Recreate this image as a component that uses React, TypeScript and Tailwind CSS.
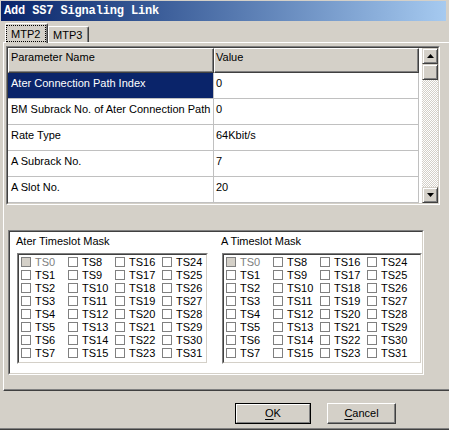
import React from 'react';

const raised =
  'border border-t-[#d4d0c8] border-l-[#d4d0c8] border-r-[#404040] border-b-[#404040] shadow-[inset_1px_1px_0_#ffffff,inset_-1px_-1px_0_#808080] bg-[#d4d0c8]';

const rows: [string, string][] = [
  ['Ater Connection Path Index', '0'],
  ['BM Subrack No. of Ater Connection Path', '0'],
  ['Rate Type', '64Kbit/s'],
  ['A Subrack No.', '7'],
  ['A Slot No.', '20'],
];

const slots = Array.from({ length: 32 }, (_, i) => i);

function Arrow({ down = false }: { down?: boolean }) {
  return (
    <svg width="7" height="4" viewBox="0 0 7 4">
      <polygon points={down ? '0,0 7,0 3.5,4' : '3.5,0 7,4 0,4'} fill="#000" />
    </svg>
  );
}

function Check({ n }: { n: number }) {
  const disabled = n === 0;
  return (
    <div className="flex items-start h-[13px] w-[47px]">
      <span
        className={`w-[10px] h-[10px] shrink-0 border border-[#808080] ${
          disabled ? 'bg-[#d4d0c8]' : 'bg-white'
        }`}
      />
      <span className={`ml-[4px] leading-[10px] ${disabled ? 'text-[#808080]' : 'text-black'}`}>
        TS{n}
      </span>
    </div>
  );
}

function SlotGroup({ title, width }: { title: string; width: string }) {
  return (
    <div className="flex flex-col">
      <div className="leading-[13px] mt-[3px] -ml-[1px]">{title}</div>
      <div
        className={`mt-[5px] ${width} border border-t-[#808080] border-l-[#808080] border-r-white border-b-white`}
      >
        <div className="border border-t-[#404040] border-l-[#404040] border-r-[#d4d0c8] border-b-[#d4d0c8] bg-white pt-[2px] pb-[1px] pl-[2px]">
          <div className="grid grid-flow-col grid-rows-8 w-max">
            {slots.map((n) => (
              <Check key={n} n={n} />
            ))}
          </div>
        </div>
      </div>
    </div>
  );
}

export default function App() {
  return (
    <div className="w-[449px] h-[430px] overflow-hidden bg-[#d4d0c8] flex flex-col text-[11px] text-black font-['Liberation_Sans',Arial,sans-serif] border-b border-b-[#404040] shadow-[inset_0_-1px_0_#808080]">
      {/* title bar */}
      <div className="h-[21px] pt-[1px] pl-[1px] shrink-0">
        <div className="w-[445px] h-[20px] bg-gradient-to-r from-[#0a246a] to-[#a6caf0] pl-[3px] flex items-center">
          <span className="font-['Liberation_Mono',monospace] font-bold text-[12px] text-white leading-none tracking-[-0.15px]">
            Add SS7 Signaling Link
          </span>
        </div>
      </div>

      {/* tabs */}
      <div className="h-[21px] pl-[5px] flex items-end shrink-0">
        <div className="relative z-10 w-[43px] h-[20px] -mb-[1px] bg-[#d4d0c8] border-t border-l border-t-white border-l-white border-r border-r-[#404040] shadow-[inset_-1px_0_0_#808080] rounded-tl-[2px] rounded-tr-[2px] pt-[1px] pr-[1px]">
          <div className="h-[17px] border border-dotted border-black pl-[4px] pt-[2px] leading-[13px]">
            MTP2
          </div>
        </div>
        <div className="w-[41px] h-[16px] bg-[#d4d0c8] border-t border-l border-t-white border-l-white border-r border-r-[#404040] shadow-[inset_-1px_0_0_#808080] rounded-tr-[2px] pl-[4px] pt-[2px] leading-[13px]">
          MTP3
        </div>
      </div>

      {/* tab panel */}
      <div className="ml-[3px] w-[450px] h-[349px] shrink-0 border-t border-l border-t-white border-l-white border-b border-b-[#404040] shadow-[inset_0_-1px_0_#808080] pt-[3px]">
        {/* parameter grid */}
        <div className="ml-[2px] w-[434px] border border-t-[#808080] border-l-[#808080] border-r-white border-b-white">
          <div className="flex border border-t-[#404040] border-l-[#404040] border-r-[#d4d0c8] border-b-[#d4d0c8] bg-white">
            <div className="w-[414px] flex flex-col">
              <div className="flex h-[25px]">
                <div className="w-[206px] bg-[#d4d0c8] border-t border-l border-t-white border-l-white border-r border-b border-r-[#404040] border-b-[#404040] shadow-[inset_-1px_-1px_0_#808080] pl-[2px] pt-[2px] leading-[13px]">
                  Parameter Name
                </div>
                <div className="w-[205px] bg-[#d4d0c8] border-t border-l border-t-white border-l-white border-r border-b border-r-[#404040] border-b-[#404040] shadow-[inset_-1px_-1px_0_#808080] pl-[1px] pt-[2px] leading-[13px]">
                  Value
                </div>
                <div className="w-[3px] bg-white" />
              </div>
              {rows.map(([name, value], i) => (
                <div key={name} className="flex h-[26px]">
                  <div
                    className={`w-[206px] border-b border-r border-[#c0c0c0] pl-[3px] pt-[4px] leading-[13px] whitespace-nowrap ${
                      i === 0 ? 'bg-[#0a246a] text-white' : ''
                    }`}
                  >
                    {name}
                  </div>
                  <div className="w-[205px] border-b border-r border-[#c0c0c0] pl-[2px] pt-[4px] leading-[13px]">
                    {value}
                  </div>
                </div>
              ))}
            </div>
            {/* scrollbar */}
            <div className="w-[16px] flex flex-col bg-[repeating-conic-gradient(#d4d0c8_0%_25%,#ffffff_0%_50%)] bg-[length:2px_2px]">
              <div className={`h-[16px] flex items-center justify-center ${raised}`}>
                <Arrow />
              </div>
              <div className={`h-[16px] ${raised}`} />
              <div className="flex-1" />
              <div className={`h-[16px] flex items-center justify-center ${raised}`}>
                <Arrow down />
              </div>
            </div>
          </div>
        </div>

        {/* timeslot masks */}
        <div className="ml-[4px] mt-[25px] w-[416px] h-[145px] border border-t-[#808080] border-l-[#808080] border-r-white border-b-white">
          <div className="h-full flex border border-t-[#404040] border-l-[#404040] border-r-[#d4d0c8] border-b-[#d4d0c8] bg-white pl-[7px]">
            <SlotGroup title="Ater Timeslot Mask" width="w-[191px]" />
            <div className="ml-[14px]">
              <SlotGroup title="A Timeslot Mask" width="w-[200px]" />
            </div>
          </div>
        </div>
      </div>

      {/* buttons */}
      <div className="flex justify-end gap-[16px] pr-[53px] mt-[12px]">
        <div className="w-[76px] h-[21px] border border-black">
          <div className="h-full border border-t-white border-l-white border-r-[#808080] border-b-[#808080] flex items-center justify-center">
            <span>
              <span className="underline underline-offset-[2px]">O</span>K
            </span>
          </div>
        </div>
        <div className={`w-[69px] h-[21px] flex items-center justify-center border border-t-white border-l-white border-r-[#404040] border-b-[#404040] shadow-[inset_-1px_-1px_0_#808080]`}>
          <span>
            <span className="underline underline-offset-[2px]">C</span>ancel
          </span>
        </div>
      </div>
    </div>
  );
}
